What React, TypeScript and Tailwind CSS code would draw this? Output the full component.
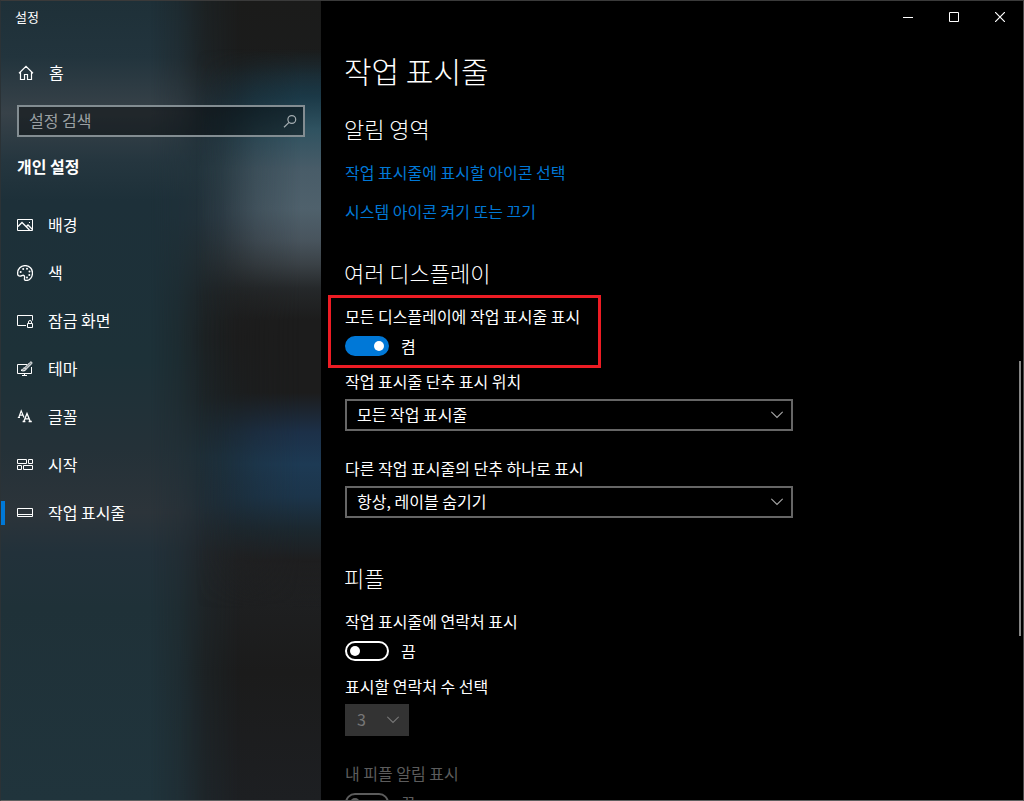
import { useState } from 'react'
import type { ReactNode } from 'react'

const iconProps = {
  viewBox: '0 0 16 16',
  fill: 'none',
  stroke: 'currentColor',
  className: 'size-4 shrink-0',
  'aria-hidden': true,
}

function HomeIcon() {
  return (
    <svg {...iconProps} strokeWidth="1.2">
      <path d="M1 8.2 8 1.3l7 6.9M2.5 7v7.5h4v-5h3v5h4V7" />
    </svg>
  )
}

function SearchIcon() {
  return (
    <svg {...iconProps} strokeWidth="1.2">
      <circle cx="9.8" cy="5.5" r="3.900" />
      <path d="M7 8.400 2 13.300" />
    </svg>
  )
}

function PictureIcon() {
  return (
    <svg {...iconProps}>
      <path d="M.5 2.5h15v11H.5z" />
      <path d="M1 9.5 5 5.5l7.5 7.5M9 10l2-2 4.5 4.5" strokeWidth="1.3" />
      <path d="M12 5.5h1" />
    </svg>
  )
}

function PaletteIcon() {
  return (
    <svg {...iconProps} strokeWidth="1.3">
      <path d="M.6 8.6C.6 3.8 3.8.6 8.2.6c4.3 0 7.3 3.3 7.3 7.4 0 4.2-2.8 7.5-6.2 7.5-1.6 0-2.1-1-1.8-2.3.3-1.4.2-2.500-.9-2.900-1.100-.4-1.900.7-3.400.8C1.600 11.200.6 10.200.6 8.600z" />
      <g fill="currentColor" stroke="none">
        <circle cx="3.7" cy="7" r="1" />
        <circle cx="6.2" cy="4" r="1" />
        <circle cx="10" cy="3.7" r="1" />
        <circle cx="12.5" cy="6.5" r="1" />
        <circle cx="12.3" cy="10" r="1" />
        <circle cx="10" cy="12.5" r="1" />
      </g>
    </svg>
  )
}

function LockScreenIcon() {
  return (
    <svg {...iconProps}>
      <path d="M9 12.5H.5v-10h15v5M10.5 10.5h5v4h-5zM11.5 10.5V9a1.5 1.5 0 0 1 3 0v1.5" />
    </svg>
  )
}

function ThemeIcon() {
  return (
    <svg {...iconProps}>
      <path d="M10 3.5H.5v9h14V6M7.5 12.5v2M5 14.5h5" />
      <path
        d="M14.7 1.2c-.6-.6-1.3-.2-1.8.3L7.5 6.9l1.5 1.5 5.4-5.4c.5-.5.8-1.2.3-1.8zM7.5 7c-1.8 0-2 1.8-3.5 2.4 1.7.9 4.6.7 5-1"
        fill="currentColor"
        fillOpacity="0.5"
      />
    </svg>
  )
}

function FontIcon() {
  return (
    <svg {...iconProps}>
      <path d="M1.8 8.5 4.2 1.8 7 8.5M2.7 6.2h3.4M.8 8.500h2.200" strokeWidth="1.2" />
      <path d="M6.8 12.5 10 4.5l3.3 8M8 9.8h4.3M5.6 12.5h2.8M11.6 12.5h3.2" strokeWidth="1.3" />
    </svg>
  )
}

function StartIcon() {
  return (
    <svg {...iconProps}>
      <path d="M.5 2.5h9v4h-9zM11.5 2.5h4v4h-4zM.5 8.5h4v4h-4zM6.5 8.5h9v4h-9z" />
    </svg>
  )
}

function TaskbarIcon() {
  return (
    <svg {...iconProps}>
      <path d="M.5 3.5h15v8H.5zM.5 9.5h15" />
    </svg>
  )
}

function ChevronIcon() {
  return (
    <svg
      viewBox="0 0 12 8"
      fill="none"
      stroke="currentColor"
      strokeWidth="1.2"
      className="pointer-events-none absolute right-2.5 top-3 h-2 w-3"
      aria-hidden
    >
      <path d="M.3.8 6 6.5 11.7.8" />
    </svg>
  )
}

const navItems = [
  { label: '배경', icon: <PictureIcon /> },
  { label: '색', icon: <PaletteIcon /> },
  { label: '잠금 화면', icon: <LockScreenIcon /> },
  { label: '테마', icon: <ThemeIcon /> },
  { label: '글꼴', icon: <FontIcon /> },
  { label: '시작', icon: <StartIcon /> },
  { label: '작업 표시줄', icon: <TaskbarIcon />, active: true },
]

// Acrylic tint: a teal base, a dark strip and coloured glows near the right edge
function Backdrop() {
  return (
    <div className="absolute inset-0 -z-10 bg-[linear-gradient(#1e3038_0%,#22343d_7%,#384249_14%,#25363f_20%,#1d3039_25%,#1d3138_45%,#243138_56%,#2c343a_64%,#22313a_69%,#1f3138_76%,#20343c_100%)]">
      <div className="absolute inset-0 bg-[linear-gradient(#1b1b1a_0%,#1b1c1c_8%,#1a2a33_15%,#22333b_21%,#24313a_27%,#232a2e_32%,#1e2021_37%,#1c1c1c_42%,#1b2022_50%,#1b2c35_57%,#1c2a33_63%,#202224_69%,#1b1b1b_84%,#1d1f22_100%)] [mask-image:linear-gradient(to_right,transparent_150px,#0004_178px,#000b_205px,black_240px)]" />
      <div className="absolute inset-0 bg-[linear-gradient(#1b394700_6%,#1b3947_12%,#2f5260_16%,#485c68_21%,#4f616c_26%,#48545d_30%,#3a4146_33%,#25282a_36%,#1c1c1c_40%,#1c1c1c_49%,#1c3048_54%,#1d3a54_58%,#1c354b_62%,#1b2830_66%,#1e1e1f_70%,#1b1b1b00_76%)] [mask-image:linear-gradient(to_right,transparent_195px,#0003_220px,#000a_255px,black_300px)]" />
    </div>
  )
}

function Sidebar() {
  return (
    <aside className="relative z-0 flex w-80 shrink-0 flex-col">
      <Backdrop />
      <div className="flex h-8 items-center px-3.5 text-[13px]">설정</div>
      <a href="#home" className="mt-4 flex h-12 items-center gap-[15px] px-[17px]">
        <HomeIcon />
        <span className="pb-0.5">홈</span>
      </a>
      <div className="relative mx-4 mt-2">
        <input
          type="search"
          aria-label="설정 검색"
          placeholder="설정 검색"
          className="block h-8 w-full border-2 border-[#838d92] bg-black/40 pb-0.5 pl-2.5 pr-8 placeholder:text-[#9ba0a3] focus:outline-none"
        />
        <span className="pointer-events-none absolute right-[7px] top-[9px] text-[#a5adb1]">
          <SearchIcon />
        </span>
      </div>
      <h2 className="mt-[17px] px-4 font-bold leading-6">개인 설정</h2>
      <nav className="mt-[23px]">
        {navItems.map((item) => (
          <a
            key={item.label}
            href="#nav"
            aria-current={item.active ? 'page' : undefined}
            className="relative flex h-12 items-center gap-[15px] px-4"
          >
            {item.active && <span className="absolute left-0 top-3 h-6 w-1 bg-[#0078d7]" />}
            {item.icon}
            <span className="pb-0.5">{item.label}</span>
          </a>
        ))}
      </nav>
    </aside>
  )
}

function WindowButtons() {
  const button = 'flex w-[46px] items-center justify-center hover:bg-white/10'
  return (
    <div className="flex h-8 justify-end">
      <button type="button" aria-label="최소화" className={button}>
        <svg viewBox="0 0 10 10" className="size-2.5" stroke="currentColor">
          <path d="M0 5.5h10" />
        </svg>
      </button>
      <button type="button" aria-label="최대화" className={button}>
        <svg viewBox="0 0 10 10" className="size-2.5" fill="none" stroke="currentColor">
          <path d="M.5.5h9v9h-9z" />
        </svg>
      </button>
      <button type="button" aria-label="닫기" className={button}>
        <svg viewBox="0 0 10 10" className="size-2.5" stroke="currentColor" strokeWidth="1.2">
          <path d="M0 0l10 10M10 0 0 10" />
        </svg>
      </button>
    </div>
  )
}

function SectionTitle({ children }: { children: ReactNode }) {
  return <h2 className="-ml-px text-[22px] font-light leading-6">{children}</h2>
}

type ToggleProps = { id: string; label: string; defaultOn?: boolean; disabled?: boolean }

function Toggle({ id, label, defaultOn = false, disabled }: ToggleProps) {
  const [on, setOn] = useState(defaultOn)
  return (
    <div className={disabled ? 'text-[#5c5c5c]' : ''}>
      <label htmlFor={id} className="block leading-[22px]">
        {label}
      </label>
      <div className="mt-[9px] flex h-5 items-center gap-3">
        <input
          id={id}
          type="checkbox"
          role="switch"
          checked={on}
          disabled={disabled}
          onChange={(e) => setOn(e.target.checked)}
          className="flex h-5 w-11 appearance-none items-center rounded-full border-2 border-current px-[3px] before:size-2.5 before:rounded-full before:bg-current checked:justify-end checked:border-[#0078d7] checked:bg-[#0078d7]"
        />
        <span>{on ? '켬' : '끔'}</span>
      </div>
    </div>
  )
}

type SelectProps = { id: string; label: string; options: string[]; disabled?: boolean }

function SelectField({ id, label, options, disabled }: SelectProps) {
  return (
    <div>
      <label htmlFor={id} className="block leading-[22px]">
        {label}
      </label>
      <div className={disabled ? 'relative mt-[7px] w-16 text-[#777]' : 'relative mt-[7px] max-w-[448px] text-[#a6a6a6]'}>
        <select
          id={id}
          disabled={disabled}
          className="block h-8 w-full appearance-none border-2 border-[#666] bg-black pb-0.5 pl-2.5 pr-8 text-white disabled:border-[#333] disabled:bg-[#333] disabled:text-[#777] disabled:opacity-100"
        >
          {options.map((option) => (
            <option key={option}>{option}</option>
          ))}
        </select>
        <ChevronIcon />
      </div>
    </div>
  )
}

export default function App() {
  return (
    <div className="flex h-screen overflow-hidden border border-b-[#606060] border-l-[#2b3236] border-r-[#4a4a4a] border-t-[#3a3a3a] bg-black font-['Noto_Sans_CJK_KR',sans-serif] text-base text-white">
      <Sidebar />
      <main className="relative min-w-0 flex-1 overflow-hidden">
        <WindowButtons />
        <div className="px-6 pt-[17px]">
          <h1 className="-ml-px text-[30px] font-light leading-10">작업 표시줄</h1>

          <section className="mt-[26px]">
            <SectionTitle>알림 영역</SectionTitle>
            <div className="mt-[21px] flex flex-col items-start gap-[17px] leading-[22px] text-[#0078d7]">
              <a href="#icons">작업 표시줄에 표시할 아이콘 선택</a>
              <a href="#system-icons">시스템 아이콘 켜기 또는 끄기</a>
            </div>
          </section>

          <section className="mt-[38px]">
            <SectionTitle>여러 디스플레이</SectionTitle>
            <div className="relative mt-[21px] w-fit">
              <Toggle id="all-displays" label="모든 디스플레이에 작업 표시줄 표시" defaultOn />
              <span className="pointer-events-none absolute -bottom-3 -left-[17px] -right-[21px] -top-2.5 border-3 border-[#ed1c24]" />
            </div>
            <div className="mt-3.5 flex flex-col gap-[26px]">
              <SelectField id="button-place" label="작업 표시줄 단추 표시 위치" options={['모든 작업 표시줄']} />
              <SelectField id="combine" label="다른 작업 표시줄의 단추 하나로 표시" options={['항상, 레이블 숨기기']} />
            </div>
          </section>

          <section className="mt-[47px]">
            <SectionTitle>피플</SectionTitle>
            <div className="mt-[21px]">
              <Toggle id="contacts" label="작업 표시줄에 연락처 표시" />
            </div>
            <div className="mt-3.5 flex flex-col gap-[26px]">
              <SelectField id="contact-count" label="표시할 연락처 수 선택" options={['3']} disabled />
              <Toggle id="people-alerts" label="내 피플 알림 표시" disabled />
            </div>
          </section>
        </div>
        <div className="absolute right-0.5 top-[45%] h-[275px] w-0.5 bg-[#858585]" />
      </main>
    </div>
  )
}
